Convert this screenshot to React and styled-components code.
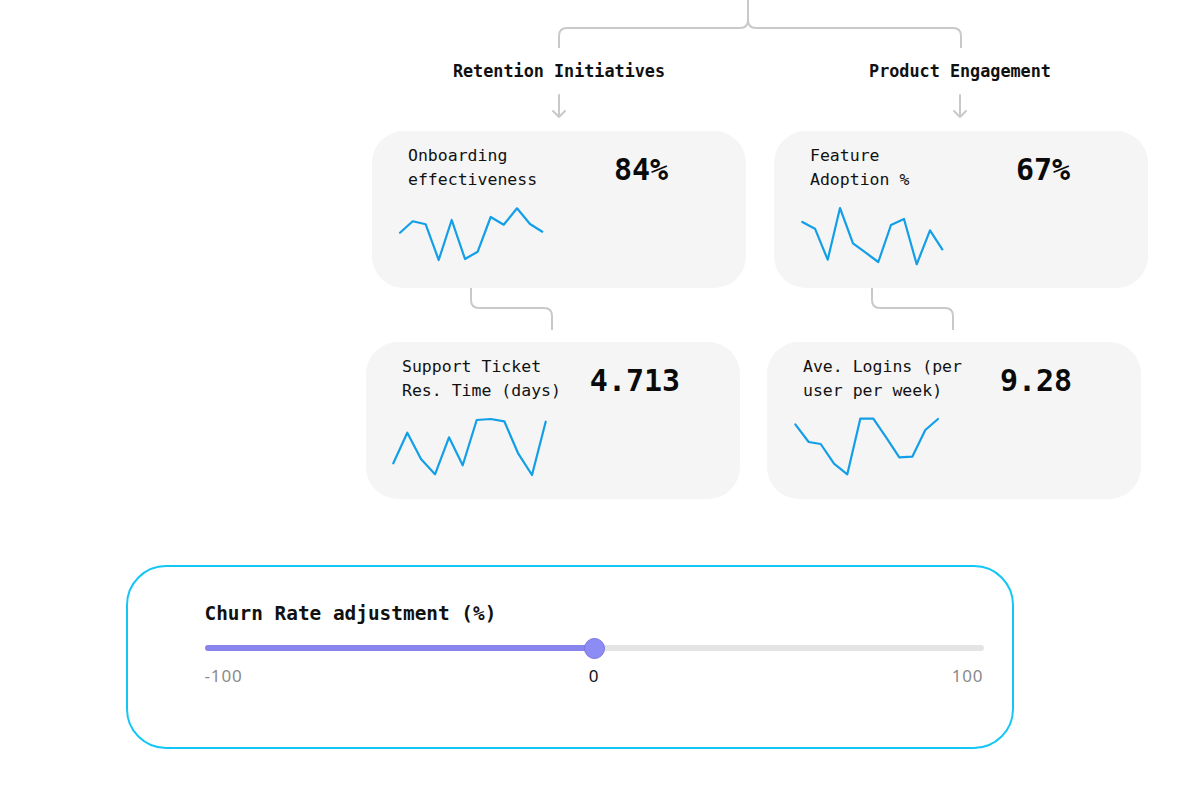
import React from "react";
import styled, { createGlobalStyle } from "styled-components";

const Global = createGlobalStyle`
  html, body { margin: 0; padding: 0; background: #ffffff; }
  body { font-family: "DejaVu Sans Mono", "Liberation Mono", monospace; color: #111; }
  * { box-sizing: border-box; }
`;

const Page = styled.div`
  width: 1200px;
  height: 800px;
  overflow: hidden;
  display: flex;
  flex-direction: column;
`;

const Tree = styled.section`
  margin-left: 366px;
  width: 782px;
  display: flex;
  flex-direction: column;
`;

const Connector = styled.svg`
  display: block;
  overflow: visible;
`;

const Branches = styled.div`
  display: grid;
  grid-template-columns: 380px 381px;
  column-gap: 21px;
`;

const Branch = styled.div`
  display: flex;
  flex-direction: column;
  min-width: 0;
`;

const Head = styled.div`
  width: 386px;
  display: flex;
  flex-direction: column;
  align-items: center;
`;

const BranchLabel = styled.div`
  height: 46px;
  line-height: 46px;
  font-size: 16.8px;
  font-weight: 700;
  white-space: nowrap;
`;

const Card = styled.div`
  width: 374px;
  height: 157px;
  margin-left: ${(p) => p.$shift || 0}px;
  margin-top: ${(p) => p.$top || 0}px;
  background: #f5f5f5;
  border-radius: 32px;
  padding: 13px 36px 0 0;
  display: grid;
  grid-template-columns: 200px 1fr;
  grid-template-rows: 48px auto;
  row-gap: 9px;
`;

const Title = styled.div`
  padding-left: 36px;
  font-size: 16.5px;
  line-height: 24px;
  white-space: pre-line;
  color: #111;
`;

const Value = styled.div`
  align-self: center;
  text-align: center;
  font-size: 30px;
  font-weight: 700;
  line-height: 36px;
  padding-top: 4px;
  color: #0a0a0a;
`;

const Spark = styled.svg`
  display: block;
  grid-column: 1 / span 2;
  margin-left: 20px;
`;

const SliderCard = styled.section`
  margin-top: 66px;
  margin-left: 126px;
  width: 888px;
  height: 184px;
  border: 2.5px solid #14c6f5;
  border-radius: 40px;
  padding: 35px 28.5px 0 76.5px;
  display: flex;
  flex-direction: column;
`;

const SliderTitle = styled.div`
  font-size: 19.4px;
  font-weight: 700;
  line-height: 24px;
  color: #111;
`;

const Track = styled.div`
  position: relative;
  margin-top: 12px;
  height: 20px;
  display: flex;
  align-items: center;
`;

const Rail = styled.div`
  position: relative;
  width: 100%;
  height: 6px;
  border-radius: 3px;
  background: #e4e4e4;
`;

const Fill = styled.div`
  height: 100%;
  border-radius: 3px;
  background: #8985ef;
`;

const Thumb = styled.div`
  position: absolute;
  top: 50%;
  width: 21px;
  height: 21px;
  margin: -10.5px 0 0 -10.5px;
  border-radius: 50%;
  background: #8d8cf4;
  border: 1px solid #7773e0;
`;

const Ticks = styled.div`
  margin-top: 8px;
  display: grid;
  grid-template-columns: 1fr auto 1fr;
  font-family: "Noto Sans", "Open Sans", sans-serif;
  font-size: 17px;
  line-height: 20px;
  letter-spacing: 0.9px;
`;

const Tick = styled.span`
  color: ${(p) => (p.$active ? "#111" : "#8a8a8a")};
  text-align: ${(p) => p.$align};
`;

const LINE = "#c9c9c9";

const Arrow = () => (
  <Connector width="20" height="26" viewBox="0 0 20 26">
    <path d="M10 1 V23 M4 17 L10 23 L16 17" fill="none" stroke={LINE} strokeWidth="2" strokeLinecap="round" strokeLinejoin="round" />
  </Connector>
);

const metrics = [
  {
    title: "Onboarding\neffectiveness",
    value: "84%",
    shift: 6,
    pts: [[8, 31.7], [20.7, 20.3], [33.7, 23.3], [46.7, 59], [59.7, 19], [73, 58], [85.7, 50.7], [98.7, 16], [111.7, 23.7], [125, 7.3], [138, 23], [150.3, 30.7]],
  },
  {
    title: "Feature\nAdoption %",
    value: "67%",
    shift: 7,
    pts: [[8.3, 21], [21, 27.7], [33.7, 58.7], [46, 7], [59, 42.3], [71.7, 51.7], [84.3, 61], [97, 24], [110, 18], [122.7, 63.3], [136, 29.3], [148.3, 48.3]],
  },
  {
    title: "Support Ticket\nRes. Time (days)",
    value: "4.713",
    shift: 0,
    pts: [[7.3, 51.3], [21.3, 20.7], [35, 47], [49, 62.3], [63, 25.3], [76.7, 53.3], [90.7, 8], [104.7, 7], [118.3, 9.3], [132.3, 41.7], [146, 63], [159.7, 9.7]],
  },
  {
    title: "Ave. Logins (per\nuser per week)",
    value: "9.28",
    shift: 0,
    pts: [[8.3, 12.3], [21.7, 30], [33.7, 32], [47, 51.7], [60.3, 62.3], [73.3, 6.7], [86.3, 6.7], [99.3, 25.7], [112.3, 45.3], [125.3, 44.7], [138.3, 18], [151, 7]],
  },
];

const Metric = ({ m, top }) => (
  <Card $shift={m.shift} $top={top}>
    <Title>{m.title}</Title>
    <Value>{m.value}</Value>
    <Spark width="170" height="70" viewBox="0 0 170 70">
      <polyline
        points={m.pts.map((p) => p.join(",")).join(" ")}
        fill="none"
        stroke="#139fe7"
        strokeWidth="2.2"
        strokeLinejoin="round"
        strokeLinecap="round"
      />
    </Spark>
  </Card>
);

const Link = () => (
  <Connector width="200" height="54" viewBox="0 0 200 54">
    <path d="M105 0 V12 Q105 20 113 20 H178 Q186 20 186 28 V42" fill="none" stroke={LINE} strokeWidth="2" />
  </Connector>
);

const branches = [
  { label: "Retention Initiatives", top: metrics[0], bottom: metrics[2] },
  { label: "Product Engagement", top: metrics[1], bottom: metrics[3] },
];

export default function App() {
  const value = 0;
  const pct = ((value + 100) / 200) * 100;
  return (
    <Page>
      <Global />
      <Tree>
        <Connector width="782" height="48" viewBox="0 0 782 48">
          <path
            d="M382 0 V20 Q382 28 374 28 H201 Q193 28 193 36 V48 M382 20 Q382 28 390 28 H587 Q595 28 595 36 V48"
            fill="none"
            stroke={LINE}
            strokeWidth="2"
          />
        </Connector>
        <Branches>
          {branches.map((b) => (
            <Branch key={b.label}>
              <Head>
                <BranchLabel>{b.label}</BranchLabel>
                <Arrow />
              </Head>
              <Metric m={b.top} top={11} />
              <Link />
              <Metric m={b.bottom} />
            </Branch>
          ))}
        </Branches>
      </Tree>
      <SliderCard>
        <SliderTitle>Churn Rate adjustment (%)</SliderTitle>
        <Track>
          <Rail>
            <Fill style={{ width: `${pct}%` }} />
            <Thumb style={{ left: `${pct}%` }} />
          </Rail>
        </Track>
        <Ticks>
          <Tick $align="left">-100</Tick>
          <Tick $align="center" $active>0</Tick>
          <Tick $align="right">100</Tick>
        </Ticks>
      </SliderCard>
    </Page>
  );
}
